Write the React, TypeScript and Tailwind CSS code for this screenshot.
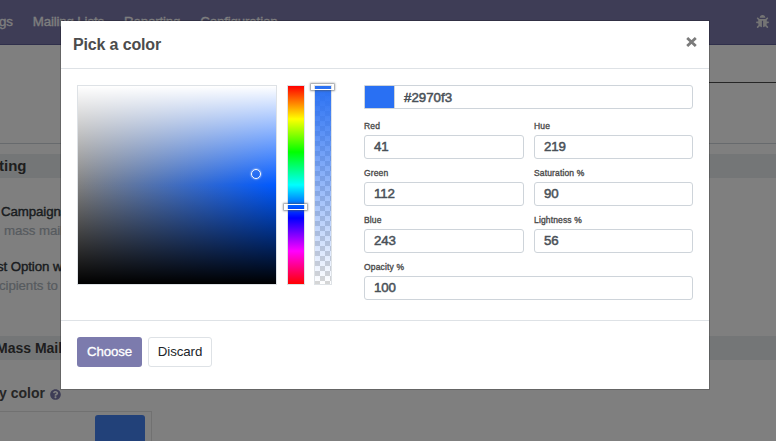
import type { ReactNode } from "react";
import { FaBug, FaQuestionCircle } from "react-icons/fa";

function Field({ label, value, wide = false }: { label: string; value: string; wide?: boolean }) {
  return (
    <div className={wide ? "col-span-2" : ""}>
      <div className="h-[17px] pt-[1px] text-[8.5px] leading-[17px] tracking-[0.15px] text-[#4c4c4c] [-webkit-text-stroke:0.35px]">{label}</div>
      <div className="mt-[1px] flex h-6 items-center rounded-[3px] border border-[#ced4da] px-[9px] text-[13.3px] leading-none tracking-[-0.1px] text-[#495057] [-webkit-text-stroke:0.5px]">
        {value}
      </div>
    </div>
  );
}

function SectionBand({ children }: { children: ReactNode }) {
  return (
    <div className="flex h-6 items-center overflow-hidden bg-[#e9ecef] text-[15px] font-bold whitespace-nowrap text-[#3c3c3c]">
      {children}
    </div>
  );
}

function SettingsPage() {
  return (
    <div className="h-full overflow-hidden bg-white">
      <nav className="flex h-[45px] items-center justify-between border-b border-[#5f5e97] bg-[#7c7bad] pr-[7px] text-[13.3px] tracking-[-0.15px] text-[#fdfdfd]">
        <div className="flex gap-[20px] whitespace-nowrap [-webkit-text-stroke:0.3px]">
          <span className="-ml-[1px]">gs</span>
          <span>Mailing Lists</span>
          <span>Reporting</span>
          <span>Configuration</span>
        </div>
        <FaBug className="mb-[2px] size-[13px] text-[#e8e8e8]" />
      </nav>
      <div className="flex h-[99px] justify-end border-b border-[#ced4da]">
        <div className="h-[38px] w-[120px] border-b border-[#4c4c4c]" />
      </div>
      <div className="h-[10px]" />
      <SectionBand><span className="-ml-px">ting</span></SectionBand>
      <div className="h-[158px] pt-6 text-[13.3px] leading-[19px] tracking-[-0.1px] whitespace-nowrap">
        <div className="pl-[1px] text-[#343a40] [-webkit-text-stroke:0.4px]">Campaigns</div>
        <div className="pl-1 text-[#adb5bd] [-webkit-text-stroke:0.2px]">mass mailing</div>
        <div className="mt-[17px] -ml-[3px] text-[#343a40] [-webkit-text-stroke:0.4px]">st Option when</div>
        <div className="-ml-px text-[#adb5bd] [-webkit-text-stroke:0.2px]">cipients to</div>
      </div>
      <SectionBand><span className="-ml-[4px] text-[14px]">Mass Mailing</span></SectionBand>
      <div className="mt-[23px] flex h-[20px] items-center gap-[5px] text-[14px] font-bold text-[#4c4c4c]">
        <span className="-ml-[1px]">y color</span>
        <FaQuestionCircle className="mt-[3px] size-[11px] text-[#7c7bad]" />
      </div>
      <div className="mt-[8px] flex h-[40px] w-[152px] justify-end border border-l-0 border-[#e2e2e2] pt-[3px] pr-[6px]">
        <div className="h-[34px] w-[50px] rounded-[3px] bg-[#4482f2]" />
      </div>
    </div>
  );
}

function SliderHandle({ className }: { className: string }) {
  return (
    <div className={`absolute -left-[4px] h-[6px] w-[23px] border border-white shadow-[0_0_2px_1px_rgba(73,80,87,0.6)] ${className}`} />
  );
}

function ColorPicker() {
  return (
    <div className="flex h-[251px] px-4 pt-4">
      <div className="relative mr-[10px] size-[200px] shrink-0 border border-[#dee2e6]">
        <div className="size-full bg-[linear-gradient(to_bottom,#fff_0%,rgba(255,255,255,0)_50%,rgba(0,0,0,0)_50%,#000_100%),linear-gradient(to_right,#808080,#0059ff)]" />
        <div className="absolute top-[83px] left-[173px] size-[10px] rounded-full border-[1.5px] border-white shadow-[0_0_2px_rgba(255,255,255,0.9)]" />
      </div>
      <div className="relative mr-[9px] h-[200px] w-[18px] shrink-0 border border-[#dee2e6] bg-[linear-gradient(to_bottom,#f00,#ff0,#0f0,#0ff,#00f,#f0f,#f00)]">
        <SliderHandle className="top-[118px]" />
      </div>
      <div className="relative h-[200px] w-[18px] shrink-0 border border-[#dee2e6]">
        <div className="size-full bg-[linear-gradient(to_bottom,#2970f3,rgba(41,112,243,0)),repeating-conic-gradient(#d6d6d6_0_25%,#fff_0_50%)] bg-[size:100%_100%,10px_10px]" />
        <SliderHandle className="-top-[2px]" />
      </div>
      <div className="ml-8 w-[329px] shrink-0">
        <div className="flex h-6 overflow-hidden rounded-r-[3px] border border-[#ced4da] text-[13.3px] leading-[23px] text-[#495057] [-webkit-text-stroke:0.5px]">
          <div className="w-[30px] border-r border-[#ced4da] bg-[#2970f3]" />
          <span className="pl-[9px]">#2970f3</span>
        </div>
        <div className="mt-[8px] grid grid-cols-[160px_159px] gap-x-[10px] gap-y-[5px]">
          <Field label="Red" value="41" />
          <Field label="Hue" value="219" />
          <Field label="Green" value="112" />
          <Field label="Saturation %" value="90" />
          <Field label="Blue" value="243" />
          <Field label="Lightness %" value="56" />
          <Field label="Opacity %" value="100" wide />
        </div>
      </div>
    </div>
  );
}

export default function App() {
  return (
    <div className="relative h-[441px] w-[776px] overflow-hidden font-['Liberation_Sans',Arial,sans-serif]">
      <SettingsPage />
      <div className="absolute inset-0 bg-black/50 pt-5 pl-[60px]">
        <div role="dialog" className="h-[370px] w-[650px] border border-black/20 bg-white bg-clip-padding">
          <header className="flex h-12 items-center justify-between border-b border-[#dee2e6] pr-[12px] pl-3">
            <h4 className="text-[16px] font-bold tracking-[-0.15px] text-[#4c4c4c]">Pick a color</h4>
            <button aria-label="Close" className="mb-[5px] text-[#7b7b7b]">
              <svg width="11" height="10" viewBox="0 0 11 10" stroke="currentColor" strokeWidth="2.8">
                <path d="M1.2 1 9.8 9M9.8 1 1.2 9" />
              </svg>
            </button>
          </header>
          <ColorPicker />
          <footer className="flex gap-[6px] border-t border-[#dee2e6] px-4 pt-4 text-[13.3px] tracking-[-0.1px]">
            <button className="h-[30px] w-[65px] rounded-[3px] bg-[#7c7bad] text-white [-webkit-text-stroke:0.3px]">Choose</button>
            <button className="h-[30px] w-[64px] rounded-[3px] border border-[#dee2e6] text-[#212529]">Discard</button>
          </footer>
        </div>
      </div>
    </div>
  );
}
